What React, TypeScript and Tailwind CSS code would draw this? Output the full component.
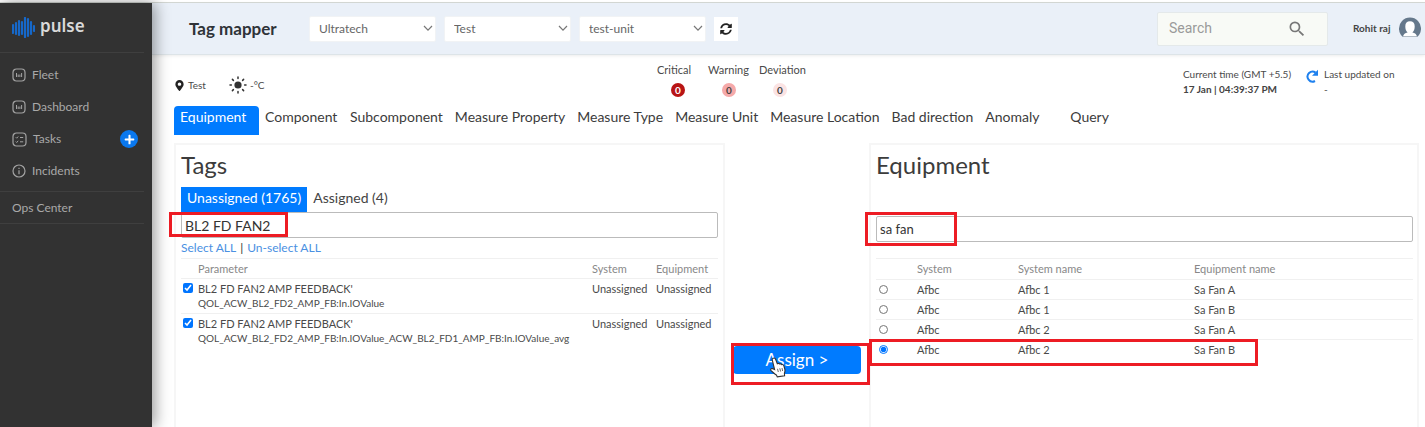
import React, { useState } from 'react';
import { FaMapMarkerAlt, FaSyncAlt, FaPlus } from 'react-icons/fa';
import { MdSearch } from 'react-icons/md';

const tabs = [
  'Equipment',
  'Component',
  'Subcomponent',
  'Measure Property',
  'Measure Type',
  'Measure Unit',
  'Measure Location',
  'Bad direction',
  'Anomaly',
  'Query',
];

const parameters = [
  { name: "BL2 FD FAN2 AMP FEEDBACK'", tag: 'QOL_ACW_BL2_FD2_AMP_FB:In.IOValue' },
  { name: "BL2 FD FAN2 AMP FEEDBACK'", tag: 'QOL_ACW_BL2_FD2_AMP_FB:In.IOValue_ACW_BL2_FD1_AMP_FB:In.IOValue_avg' },
];

const equipment = [
  { system: 'Afbc', systemName: 'Afbc 1', name: 'Sa Fan A' },
  { system: 'Afbc', systemName: 'Afbc 1', name: 'Sa Fan B' },
  { system: 'Afbc', systemName: 'Afbc 2', name: 'Sa Fan A' },
  { system: 'Afbc', systemName: 'Afbc 2', name: 'Sa Fan B' },
];

const highlight = 'pointer-events-none absolute border-3 border-[#ed1c24]';

function PulseLogo() {
  const bars = [
    [1, 8, 16],
    [4, 6, 17],
    [7, 4, 18],
    [10, 5, 17],
    [13, 1, 20],
    [16, 2, 19],
    [19, 5, 17],
    [22, 9, 14],
  ];
  return (
    <svg width="23" height="21" viewBox="0 0 23 21" aria-hidden="true">
      {bars.map(([x, top, bottom]) => (
        <line key={x} x1={x} x2={x} y1={top} y2={bottom} stroke="#1668c9" strokeWidth="2.2" strokeLinecap="round" />
      ))}
    </svg>
  );
}

function BoardIcon() {
  return (
    <svg width="14" height="14" viewBox="0 0 14 14" fill="none" stroke="#a3a3a3" aria-hidden="true">
      <rect x="1" y="1" width="12" height="12" rx="3.5" strokeWidth="1.2" />
      <path d="M4.500 5v4M6.200 6.500V9M7.900 6.500V9M9.600 5v4" strokeWidth="1" />
    </svg>
  );
}

function TasksIcon() {
  return (
    <svg width="15" height="15" viewBox="0 0 15 15" fill="none" stroke="#a3a3a3" aria-hidden="true">
      <rect x="1" y="1" width="13" height="13" rx="3.5" strokeWidth="1.2" />
      <path d="M3.8 5.3l.9.9 1.5-1.7M3.8 9.6l.9.9 1.5-1.7M8 5.5h3.2M8 9.8h3.2" strokeWidth="1" />
    </svg>
  );
}

function InfoIcon() {
  return (
    <svg width="14" height="14" viewBox="0 0 14 14" fill="none" stroke="#a3a3a3" aria-hidden="true">
      <circle cx="7" cy="7" r="6" strokeWidth="1.2" />
      <path d="M7 6.2v4M7 3.8v1.2" strokeWidth="1.2" />
    </svg>
  );
}

function SunIcon() {
  return (
    <svg width="18" height="18" viewBox="0 0 18 18" stroke="#333" strokeWidth="1.5" strokeLinecap="round" aria-hidden="true">
      <circle cx="9" cy="9" r="3.6" fill="#333" stroke="none" />
      <path d="M9 1v1.4M9 15.6V17M1 9h1.4M15.6 9H17M3.4 3.4l1 1M13.6 13.6l1 1M3.4 14.6l1-1M13.6 4.4l1-1" />
    </svg>
  );
}

function ReloadIcon() {
  return (
    <svg width="15" height="15" viewBox="0 0 15 15" fill="none" aria-hidden="true">
      <path d="M10.6 3.6A5 5 0 1 0 10 12" stroke="#1e80ee" strokeWidth="2" />
      <path d="M13 .8v6H7z" fill="#1e80ee" />
    </svg>
  );
}

function Avatar() {
  return (
    <svg width="22" height="20" viewBox="0 0 22 20" aria-hidden="true">
      <path d="M4 20A11 11 0 1 1 18 20z" fill="#65788b" />
      <path d="M4 19.6c.5-2.6 2-3.600 4.600-4.200C7 14.200 6.300 12 6.300 9.200 6.300 6 8 4.200 11 4.200s4.700 1.800 4.700 5c0 2.800-.7 5-2.300 6.200 2.600.6 4.100 1.600 4.600 4.200z" fill="#fff" />
    </svg>
  );
}

function HandCursor() {
  return (
    <svg width="16" height="21" viewBox="0 0 16 21" aria-hidden="true">
      <path
        d="M3.300 1.200c1-.5 1.900 0 2.300 1l1.700 4.600c1.200-.7 2.100-.3 2.400.3.900-.4 1.700-.1 2 .5 1-.3 1.800.1 2.100 1l1 3.400c.4 1.600.1 3-.4 4.200l.2 2.600-7.300 1.100-.9-1.900c-1.500-.8-3.300-2.500-5.300-4.400-.9-.9-.3-2.300 1.200-2l2.300.9L2.300 3.200c-.3-.9.200-1.700 1-2z"
        fill="#fff"
        stroke="#333"
        strokeWidth="1.100"
      />
      <path d="M7.500 11.800l.8 3.200M9.800 11.300l.8 3.200M12 11l.6 3" stroke="#555" strokeWidth=".9" />
    </svg>
  );
}

function HeaderSelect({ label, value }: { label: string; value: string }) {
  return (
    <div className="relative w-[127px]">
      <select
        aria-label={label}
        className="h-[26px] w-full appearance-none rounded-xs border border-[#f1f3f5] bg-white pl-[9px] text-[12px] text-[#666]"
      >
        <option>{value}</option>
      </select>
      <svg className="pointer-events-none absolute top-[10px] right-[3px]" width="10" height="7" viewBox="0 0 10 7" aria-hidden="true">
        <path d="M1 1l4 4.200L9 1" fill="none" stroke="#777" strokeWidth="1.200" />
      </svg>
    </div>
  );
}

function NavLink({ icon, label }: { icon: React.ReactNode; label: string }) {
  return (
    <a href="#" className="flex items-center gap-[6px]">
      {icon}
      {label}
    </a>
  );
}

function Sidebar() {
  return (
    <nav className="relative z-10 w-[152px] shrink-0 bg-[#323232] text-[12px] text-[#a9a9a9] shadow-[3px_0_14px_rgba(0,0,0,0.4)]">
      <div className="mr-2 flex h-[50px] items-center gap-[5px] border-b border-[#3f3f3f] pl-3">
        <PulseLogo />
        <span className="pb-1 font-['Noto_Sans'] text-[17px] leading-5 font-semibold text-[#d9d9d9]">pulse</span>
      </div>
      <ul className="mr-2 flex h-[139px] flex-col gap-3 border-b border-[#3f3f3f] pt-3 pl-3 leading-5">
        <li>
          <NavLink icon={<BoardIcon />} label="Fleet" />
        </li>
        <li>
          <NavLink icon={<BoardIcon />} label="Dashboard" />
        </li>
        <li className="flex h-5 items-center justify-between pr-[6px]">
          <NavLink icon={<TasksIcon />} label="Tasks" />
          <button aria-label="Add task" className="flex size-[18px] items-center justify-center rounded-full bg-[#0a78ee] text-[11px] text-white">
            <FaPlus />
          </button>
        </li>
        <li>
          <NavLink icon={<InfoIcon />} label="Incidents" />
        </li>
      </ul>
      <a href="#" className="mr-2 flex h-8 items-center border-b border-[#3f3f3f] pl-3">
        Ops Center
      </a>
    </nav>
  );
}

function Header() {
  return (
    <header className="flex h-[52px] items-center border-b border-[#dde4e8] bg-[#eaf0f8] pr-1 pl-[37px] shadow-[0_1px_3px_rgba(0,0,0,0.08)]">
      <h1 className="w-[120px] text-[17px] font-bold text-[#2f3338]">Tag mapper</h1>
      <div className="flex items-center gap-2">
        <HeaderSelect label="Company" value="Ultratech" />
        <HeaderSelect label="Plant" value="Test" />
        <HeaderSelect label="Unit" value="test-unit" />
        <button aria-label="Refresh" className="flex size-6 items-center justify-center bg-white text-[12px] text-[#222]">
          <FaSyncAlt />
        </button>
      </div>
      <label className="ml-auto flex h-[34px] w-[171px] items-center rounded-xs border border-[#e4e9ea] bg-[#f8faf6] pr-5 pl-[11px]">
        <input
          type="search"
          aria-label="Search"
          placeholder="Search"
          className="w-full min-w-0 font-[Roboto] text-[14px] outline-none placeholder:text-[#9a9a9a]"
        />
        <MdSearch className="shrink-0 text-[20px] text-[#777]" />
      </label>
      <span className="ml-[25px] w-[46px] text-[10px] font-bold whitespace-nowrap text-[#444]">Rohit raj</span>
      <span className="pb-1">
        <Avatar />
      </span>
    </header>
  );
}

function Alert({ label, badge }: { label: string; badge: string }) {
  return (
    <div className="flex w-[51px] flex-col gap-[6px]">
      <span>{label}</span>
      <span className={`ml-[14px] flex size-[14px] items-center justify-center rounded-full text-[10px] font-bold ${badge}`}>0</span>
    </div>
  );
}

function StatusBar() {
  return (
    <div className="flex h-[51px] text-[11px] leading-[14px] text-[#4a4a4a]">
      <div className="flex w-[483px] items-center gap-[3px] pt-[9px]">
        <FaMapMarkerAlt className="text-[#222]" />
        <span className="w-[38px] text-[10px]">Test</span>
        <SunIcon />
        <span className="text-[10px]">-°C</span>
      </div>
      <div className="flex pt-2">
        <Alert label="Critical" badge="bg-[#b81414] text-white" />
        <Alert label="Warning" badge="bg-[#f5a9a9] text-[#444]" />
        <Alert label="Deviation" badge="bg-[#fbe3e3] text-[#444]" />
      </div>
      <div className="mr-6 ml-auto flex pt-3 text-[10px] leading-[15px]">
        <div className="w-[122px] whitespace-nowrap">
          <p>Current time (GMT +5.5)</p>
          <p className="font-bold text-[#444]">17 Jan | 04:39:37 PM</p>
        </div>
        <button aria-label="Reload" className="mr-1 self-start pt-[2px]">
          <ReloadIcon />
        </button>
        <div className="w-[71px] whitespace-nowrap">
          <p>Last updated on</p>
          <p>-</p>
        </div>
      </div>
    </div>
  );
}

function TagsPanel() {
  const [query, setQuery] = useState('BL2 FD FAN2');
  return (
    <section className="min-w-0 flex-1 border-2 border-b-0 border-[#f6f6f6] px-[5px] pt-[3px]">
      <h2 className="text-[24px] leading-[34px] text-[#3c3c3c]">Tags</h2>
      <div className="mt-[5px] flex h-[25px] text-[14px] leading-[22px] text-[#444]">
        <button className="flex bg-[#007bff] px-[6px] text-white">Unassigned (1765)</button>
        <button className="flex px-[6px]">Assigned (4)</button>
      </div>
      <div className="relative">
        <input
          aria-label="Filter tags"
          value={query}
          onChange={(e) => setQuery(e.target.value)}
          className="block h-[26px] w-full rounded-xs border border-[#bbb] px-[3px] text-[14px] text-[#333]"
        />
        <span className={`${highlight} top-0 -left-3 h-[25px] w-[119px]`} />
      </div>
      <p className="flex h-5 items-center gap-1 text-[12px] text-[#4a90e2]">
        <a href="#">Select ALL</a>
        <span className="text-[#333]">|</span>
        <a href="#">Un-select ALL</a>
      </p>
      <table className="w-full table-fixed text-left text-[11px] leading-[15px] text-[#4a4a4a]">
        <colgroup>
          <col className="w-[17px]" />
          <col />
          <col className="w-16" />
          <col className="w-[62px]" />
        </colgroup>
        <thead>
          <tr className="h-5 border-y border-[#f0f0f0] text-[#888]">
            <th />
            <th className="font-normal">Parameter</th>
            <th className="font-normal">System</th>
            <th className="font-normal">Equipment</th>
          </tr>
        </thead>
        <tbody>
          {parameters.map((p) => (
            <tr key={p.tag} className="h-[35px] border-b border-[#f0f0f0] align-top last:border-b-0">
              <td className="pt-1 pl-[2px]">
                <input type="checkbox" defaultChecked aria-label={p.tag} className="block size-[10px]" />
              </td>
              <td className="pt-[2px] whitespace-nowrap">
                {p.name}
                <div className="text-[10px]">{p.tag}</div>
              </td>
              <td className="pt-[2px]">Unassigned</td>
              <td className="pt-[2px]">Unassigned</td>
            </tr>
          ))}
        </tbody>
      </table>
    </section>
  );
}

function EquipmentPanel() {
  const [query, setQuery] = useState('sa fan');
  return (
    <section className="min-w-0 flex-1 border-2 border-b-0 border-[#f6f6f6] pt-[3px] pr-1 pl-[5px]">
      <h2 className="text-[24px] leading-[34px] text-[#3c3c3c]">Equipment</h2>
      <div className="relative mt-[34px]">
        <input
          aria-label="Filter equipment"
          value={query}
          onChange={(e) => setQuery(e.target.value)}
          className="block h-[26px] w-full rounded-xs border border-[#bbb] px-[3px] text-[13px] text-[#333]"
        />
        <span className={`${highlight} -top-1 -left-[11px] h-[34px] w-[92px]`} />
      </div>
      <div className="relative mt-4">
        <table className="w-full table-fixed text-left text-[11px] text-[#4a4a4a]">
          <colgroup>
            <col className="w-[41px]" />
            <col className="w-[101px]" />
            <col className="w-44" />
            <col />
          </colgroup>
          <thead>
            <tr className="h-[21px] border-y border-[#f0f0f0] text-[#888]">
              <th />
              <th className="font-normal">System</th>
              <th className="font-normal">System name</th>
              <th className="font-normal">Equipment name</th>
            </tr>
          </thead>
          <tbody className="leading-[19px]">
            {equipment.map((e, i) => (
              <tr key={i} className="border-b border-[#f0f0f0] last:border-b-0">
                <td className="pl-[3px]">
                  <input
                    type="radio"
                    name="equipment"
                    defaultChecked={i === 3}
                    aria-label={`${e.systemName} ${e.name}`}
                    className="block size-[9px]"
                  />
                </td>
                <td>{e.system}</td>
                <td>{e.systemName}</td>
                <td>{e.name}</td>
              </tr>
            ))}
          </tbody>
        </table>
        <span className={`${highlight} -bottom-[7px] -left-[7px] h-[27px] w-[389px]`} />
      </div>
    </section>
  );
}

export default function App() {
  return (
    <div className="flex min-h-screen flex-col bg-white pt-[2px] font-[Lato,sans-serif]">
      <div className="flex flex-1 border-t border-[#d5d9d5]">
        <Sidebar />
        <div className="flex min-w-0 flex-1 flex-col">
          <Header />
          <main className="flex flex-1 flex-col pr-[6px] pl-[22px]">
            <StatusBar />
            <div className="flex h-[29px] text-[14px] leading-[22px] whitespace-nowrap text-[#3c3c3c]">
              {tabs.map((tab, i) => (
                <button
                  key={tab}
                  className={`flex min-w-[85px] px-[6px] ${i === 0 ? 'rounded-t-sm bg-[#007bff] text-white' : ''}`}
                >
                  {tab}
                </button>
              ))}
            </div>
            <div className="mt-2 flex flex-1">
              <TagsPanel />
              <div className="w-36 shrink-0 pt-[203px] pl-2">
                <div className="relative w-32">
                  <button className="flex h-7 w-full items-center justify-center rounded-sm bg-[#007bff] text-[17px] text-white">
                    Assign &gt;
                  </button>
                  <span className={`${highlight} -top-[3px] -left-[2px] h-[42px] w-[139px]`} />
                  <span className="pointer-events-none absolute top-[11px] left-[37px]">
                    <HandCursor />
                  </span>
                </div>
              </div>
              <EquipmentPanel />
            </div>
          </main>
        </div>
      </div>
    </div>
  );
}
